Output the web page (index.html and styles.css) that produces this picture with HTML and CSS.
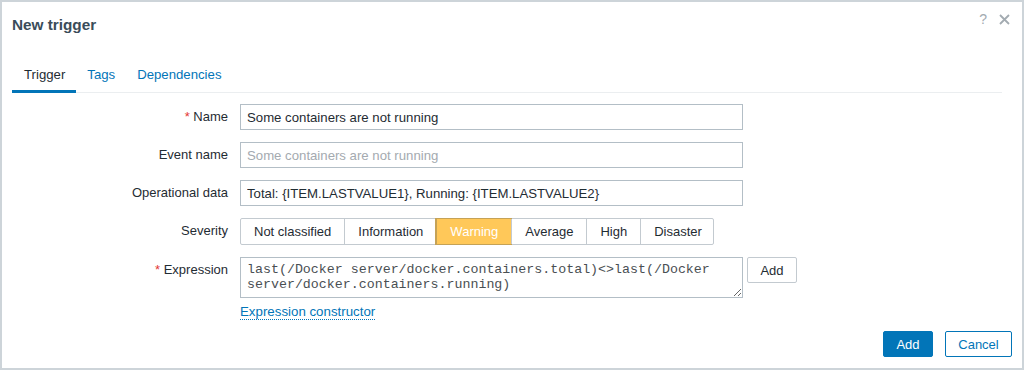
FILE: index.html
```html
<!DOCTYPE html>
<html lang="en">
<head>
    <meta charset="UTF-8">
    <title>New trigger</title>
    <link rel="stylesheet" href="styles.css">
</head>
<body>

<div class="dialog">
    <div class="header">
        <h4 class="title">New trigger</h4>
        <div class="header-icons">
            <span class="help">?</span>
            <svg class="close" width="11" height="11" viewBox="0 0 11 11">
                <path d="M1 1 L10 10 M10 1 L1 10" stroke="#a3abb1" stroke-width="1.8"/>
            </svg>
        </div>
    </div>

    <div class="tabs">
        <a class="tab active">Trigger</a>
        <a class="tab">Tags</a>
        <a class="tab">Dependencies</a>
    </div>

    <div class="form">
        <label class="label"><span class="req">*</span> Name</label>
        <div class="field"><input class="input" type="text" value="Some containers are not running"></div>

        <label class="label">Event name</label>
        <div class="field"><input class="input" type="text" placeholder="Some containers are not running"></div>

        <label class="label">Operational data</label>
        <div class="field"><input class="input" type="text" value="Total: {ITEM.LASTVALUE1}, Running: {ITEM.LASTVALUE2}"></div>

        <label class="label">Severity</label>
        <div class="field">
            <div class="severity">
                <span class="sev">Not classified</span>
                <span class="sev">Information</span>
                <span class="sev sev-warning">Warning</span>
                <span class="sev">Average</span>
                <span class="sev">High</span>
                <span class="sev">Disaster</span>
            </div>
        </div>

        <label class="label"><span class="req">*</span> Expression</label>
        <div class="field">
            <div class="expr-row">
                <textarea class="expr" spellcheck="false">last(/Docker server/docker.containers.total)&lt;&gt;last(/Docker server/docker.containers.running)</textarea>
                <button class="btn-alt">Add</button>
            </div>
            <a class="link">Expression constructor</a>
        </div>
    </div>

    <div class="footer">
        <button class="btn">Add</button>
        <button class="btn-cancel">Cancel</button>
    </div>
</div>

</body>
</html>
```

FILE: styles.css
```css
body {
    margin: 0;
    font-family: "Liberation Sans", Arial, sans-serif;
    font-size: 13px;
    color: #1f2c33;
}

.dialog {
    width: 1024px;
    height: 370px;
    box-sizing: border-box;
    border: 2px solid #cdd4d9;
    background: #fff;
    display: flex;
    flex-direction: column;
    padding: 0 10px 0 10px;
}

.header {
    display: flex;
    justify-content: space-between;
    align-items: flex-start;
    height: 56px;
}

.title {
    margin: 14px 0 0 0;
    font-size: 15.3px;
    font-weight: bold;
    color: #3a4c59;
}

.header-icons {
    display: flex;
    align-items: center;
    gap: 12px;
    margin-top: 9px;
    margin-right: 2px;
}

.help {
    font-size: 14px;
    color: #a3abb1;
}

.close {
    display: block;
}

.tabs {
    display: flex;
    height: 34px;
    border-bottom: 1px solid #ebeef0;
    margin-right: 10px;
}

.tab {
    padding: 0 11px;
    line-height: 34px;
    color: #0275b8;
    font-size: 13.2px;
}

.tab.active {
    padding: 0 11px 0 12px;
    color: #1f2c33;
    border-bottom: 3px solid #0275b8;
    margin-bottom: -1px;
    line-height: 33px;
}

.form {
    display: grid;
    grid-template-columns: 216px 1fr;
    column-gap: 12px;
    row-gap: 12px;
    margin-top: 11px;
}

.label {
    text-align: right;
    line-height: 26px;
}

.req {
    color: #e33734;
}

.field {
    display: flex;
    flex-direction: column;
    align-items: flex-start;
}

.input {
    width: 503px;
    height: 26px;
    box-sizing: border-box;
    border: 1px solid #b3bec6;
    padding: 0 6px;
    font-family: inherit;
    font-size: 13.2px;
    color: #1f2c33;
    outline: none;
}

.input::placeholder {
    color: #a4aab0;
}

.severity {
    display: flex;
    border: 1px solid #c3cad0;
    border-radius: 2px;
    height: 27px;
    box-sizing: border-box;
}

.sev {
    padding: 0 13px;
    line-height: 25px;
    border-left: 1px solid #c3cad0;
}

.sev:first-child {
    border-left: none;
}

.sev:last-child {
    padding-right: 11px;
}

.sev-warning {
    background: #ffc859;
    color: #fff;
    border-left-color: #c5a256;
    outline: 1px solid #c5a256;
}

.expr-row {
    display: flex;
    align-items: flex-start;
    gap: 4px;
}

.expr {
    width: 503px;
    height: 41px;
    box-sizing: border-box;
    border: 1px solid #b3bec6;
    padding: 4px 5px 2px 6px;
    font-family: "Liberation Mono", "Courier New", monospace;
    font-size: 13.3px;
    line-height: 15px;
    color: #4a4f53;
    outline: none;
}

.btn-alt {
    width: 50px;
    height: 26px;
    border: 1px solid #c3cad0;
    border-radius: 2px;
    background: #fff;
    font-family: inherit;
    font-size: 13px;
    color: #1f2c33;
}

.link {
    margin-top: 7px;
    color: #0275b8;
    border-bottom: 1px dotted #0275b8;
    line-height: 14px;
    font-size: 13.3px;
}

.footer {
    margin-top: auto;
    display: flex;
    justify-content: flex-end;
    gap: 12px;
    padding-bottom: 11px;
}

.btn,
.btn-cancel {
    height: 26px;
    border-radius: 2px;
    font-family: inherit;
    font-size: 13px;
    padding: 0 10px;
}

.btn {
    width: 50px;
    background: #0275b8;
    border: 1px solid #0275b8;
    color: #fff;
}

.btn-cancel {
    width: 67px;
    background: #fff;
    border: 1px solid #0275b8;
    color: #0275b8;
}
```
